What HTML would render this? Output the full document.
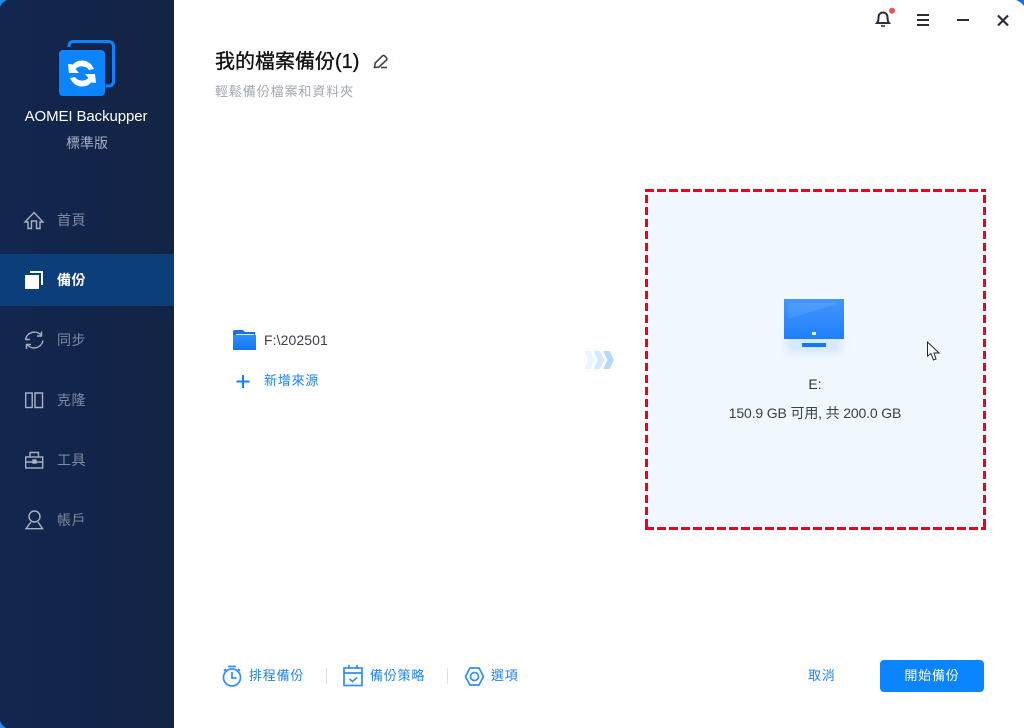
<!DOCTYPE html>
<html>
<head>
<meta charset="utf-8">
<style>
html,body{margin:0;padding:0;width:1024px;height:728px;overflow:hidden;background:#fff;font-family:"Liberation Sans","Noto Sans CJK TC",sans-serif}
.a{position:absolute;white-space:nowrap}
#side{position:absolute;left:0;top:0;width:174px;height:728px;background:linear-gradient(90deg,#122650,#132343)}
.nav{font-size:14px;line-height:20px;left:57px;color:#7d8aa0;width:40px;letter-spacing:.5px}
svg{position:absolute;overflow:visible}
.blue{color:#1d84f0;font-size:13px;line-height:18px;letter-spacing:.8px}
</style>
</head>
<body>
<div id="side"></div>
<svg style="left:0;top:0" width="1024" height="728">
<path d="M0 0H7Q2 2 0 7Z" fill="#1a8cf0"/>
<path d="M0 721Q2 726 6 728H0Z" fill="#1a8cf0"/>
<path d="M1024 0H1016Q1021 2 1024 6Z" fill="#1a6fd0"/>
<!-- Logo -->
<path d="M69 47V46Q69 41.500 74 41.500H108Q113.500 41.500 113.500 47V81Q113.500 86 108 86H106" fill="none" stroke="#0a84ff" stroke-width="3"/>
<rect x="59" y="50" width="46" height="46" rx="4" fill="#0a84ff"/>
<path d="M94 69Q90 60.500 82 60.500Q76 60.500 73 64.500L68 64L69 73H79L75.500 69Q78.500 66 83 66.500Q87 67 89 70Z" fill="#fff"/>
<path d="M94 69Q90 60.500 82 60.500Q76 60.500 73 64.500L68 64L69 73H79L75.500 69Q78.500 66 83 66.500Q87 67 89 70Z" fill="#fff" transform="rotate(180 82 73.500)"/>
<!-- Nav icons -->
<g fill="none" stroke="#a9b2c2" stroke-width="1.400">
<path d="M25 222L34 212.500L43 222H40V228.500H36.500V221H31.500V228.500H28V222Z"/>
<path d="M25.500 339.500A9 9 0 0 1 41 335M43 340.500A9 9 0 0 1 27.500 345"/>
<path d="M41.500 331.500V336H37M25 339.500H30M26.500 349V344.500H31" />
<rect x="25.700" y="393" width="6.500" height="14.500"/>
<path d="M35 393H42.500V407.500H35Z"/>
<rect x="25.700" y="457" width="17" height="11"/>
<path d="M30 457V452.500H38.500V457M25.700 462H42.500"/>
<rect x="33" y="460" width="3" height="3" fill="#a9b2c2"/>
<ellipse cx="34.500" cy="516.500" rx="5.500" ry="5.500"/>
<path d="M31 522L26 528.700H42.500L38 522"/>
</g>
<rect x="0" y="254" width="174" height="52" fill="#0c3f7a"/>
<rect x="25" y="275" width="14" height="14" fill="#fff"/>
<path d="M30 272H42V285" fill="none" stroke="#fff" stroke-width="2"/>
<!-- Title icon -->
<g fill="none" stroke="#3c4350" stroke-width="1.600">
<path d="M374.500 67.500L375.200 63L382.500 55.800Q383.500 55 384.500 55.800L386.500 57.800Q387.200 59 386.500 60L379 67Z"/>
<path d="M381 67.500H387"/>
</g>
<!-- Title bar -->
<g fill="none" stroke="#2b2f3d">
<path d="M877 23Q878.500 21 878.500 18V17A4.500 4.500 0 0 1 887.500 17V18Q887.500 21 889 23Z" stroke-width="2"/>
<path d="M881 26H885" stroke-width="1.600"/>
<path d="M917 15H929M917 20H929M917 25H929" stroke-width="2"/>
<path d="M957 20H969" stroke-width="2"/>
<path d="M998 15.500L1008 25.500M1008 15.500L998 25.500" stroke-width="2.200"/>
</g>
<circle cx="892" cy="10.700" r="3" fill="#f8505a"/>
<!-- Folder -->
<defs>
<linearGradient id="f" x1="0" y1="0" x2="0" y2="1"><stop offset="0" stop-color="#2f92fc"/><stop offset="1" stop-color="#1274f0"/></linearGradient>
<linearGradient id="m" x1="0" y1="0" x2="0" y2="1"><stop offset="0" stop-color="#4397fb"/><stop offset="1" stop-color="#1f7ffa"/></linearGradient>
<filter id="b" x="-30%" y="-30%" width="160%" height="160%"><feGaussianBlur stdDeviation="4"/></filter>
</defs>
<path d="M233 332Q233 330 235 330H243L245 332H255V340H233Z" fill="#1f6fd8"/>
<rect x="233" y="335" width="23" height="15" fill="url(#f)"/>
<path d="M236 334.500H254" stroke="#d5e7fc" stroke-width="1"/>
<path d="M243 375V388M236.500 381.500H249.500" stroke="#0a84ff" stroke-width="2"/>
<!-- Arrows -->
<path d="M584 351H590.500L595 360L590.500 369H584L588.500 360Z" fill="#eaf5fe"/>
<path d="M593.500 351H600L604.500 360L600 369H593.500L598 360Z" fill="#d3eafd"/>
<path d="M603 351H609.500L614 360L609.500 369H603L607.500 360Z" fill="#b3dafc"/>
<!-- Destination box -->
<rect x="646.500" y="190.500" width="338" height="338" fill="#f1f8ff"/>
<path d="M645 190.500H986" stroke="#f0001a" stroke-width="3" stroke-dasharray="9 3" fill="none"/>
<path d="M645 528.500H986" stroke="#f0001a" stroke-width="3" stroke-dasharray="9 3" fill="none"/>
<path d="M646.500 195V529" stroke="#f0001a" stroke-width="3" stroke-dasharray="8 4" fill="none"/>
<path d="M984.500 195V529" stroke="#f0001a" stroke-width="3" stroke-dasharray="8 4" fill="none"/>
<!-- Monitor -->
<rect x="786" y="335" width="56" height="18" fill="#c5dcfb" opacity=".6" filter="url(#b)"/>
<rect x="784" y="299" width="60" height="40" fill="url(#m)"/>
<path d="M788 303H840L788 319Z" fill="#fff" opacity=".08"/>
<rect x="812" y="332" width="4" height="3" fill="#e8f2ff"/>
<rect x="802" y="343" width="24" height="4" fill="#0f7cf4"/>
<!-- Cursor -->
<path d="M927.500 342V356L931 353.500L933.500 360L936 359L934 353H939Z" fill="#fff" stroke="#20243a" stroke-width="1"/>
<!-- Bottom icons -->
<g fill="none" stroke="#2f8ff5" stroke-width="1.700">
<circle cx="232" cy="677.500" r="8.500"/>
<path d="M228 666.500H236M232 672V678H236.500M224 671L226 669M240 671L238 669"/>
<rect x="344" y="668" width="18" height="17.500"/>
<path d="M344 673H362M349 665V669M357 665V669"/>
<path d="M349.500 679L352.500 681.500L357 677.500"/>
<path d="M470 668H479L483.500 676.500L479 685H470L465.500 676.500Z"/>
<circle cx="474.500" cy="676.500" r="4"/>
</g>
<path d="M326.500 668V684M447.500 668V684" stroke="#dcdfe4" stroke-width="1"/>
</svg>

<div class="a" style="left:-1px;width:174px;top:107px;text-align:center;color:#fff;font-size:15px;line-height:20px;letter-spacing:-.1px">AOMEI Backupper</div>
<div class="a" style="left:0;width:174px;top:133px;text-align:center;color:#a3aec2;font-size:14px;line-height:20px">標準版</div>

<div class="a nav" style="top:210px">首頁</div>
<div class="a nav" style="top:270px;color:#fff;font-weight:bold">備份</div>
<div class="a nav" style="top:330px">同步</div>
<div class="a nav" style="top:390px">克隆</div>
<div class="a nav" style="top:450px">工具</div>
<div class="a nav" style="top:510px">帳戶</div>

<div class="a" style="left:215px;top:50px;font-size:20px;line-height:24px;color:#111;-webkit-text-stroke:.35px #111">我的檔案備份(1)</div>
<div class="a" style="left:215px;top:83px;font-size:13px;line-height:18px;color:#a2a8b3;letter-spacing:.9px">輕鬆備份檔案和資料夾</div>

<div class="a" style="left:264px;top:331px;font-size:14px;line-height:18px;color:#3a3f4a;letter-spacing:.1px">F:\202501</div>
<div class="a blue" style="left:264px;top:372px">新增來源</div>

<div class="a" style="left:646px;width:338px;top:375px;text-align:center;font-size:14px;line-height:18px;color:#333">E:</div>
<div class="a" style="left:646px;width:338px;top:404px;text-align:center;font-size:14px;line-height:18px;color:#3a3f4a;letter-spacing:-.15px">150.9 GB 可用, 共 200.0 GB</div>

<div class="a blue" style="left:249px;top:667px">排程備份</div>
<div class="a blue" style="left:370px;top:667px">備份策略</div>
<div class="a blue" style="left:491px;top:667px">選項</div>
<div class="a blue" style="left:808px;top:667px">取消</div>
<div class="a" style="left:880px;top:660px;width:104px;height:32px;background:#0a84ff;border-radius:4px;text-align:center;color:#fff;font-size:13px;line-height:32px;letter-spacing:.8px">開始備份</div>
</body>
</html>
